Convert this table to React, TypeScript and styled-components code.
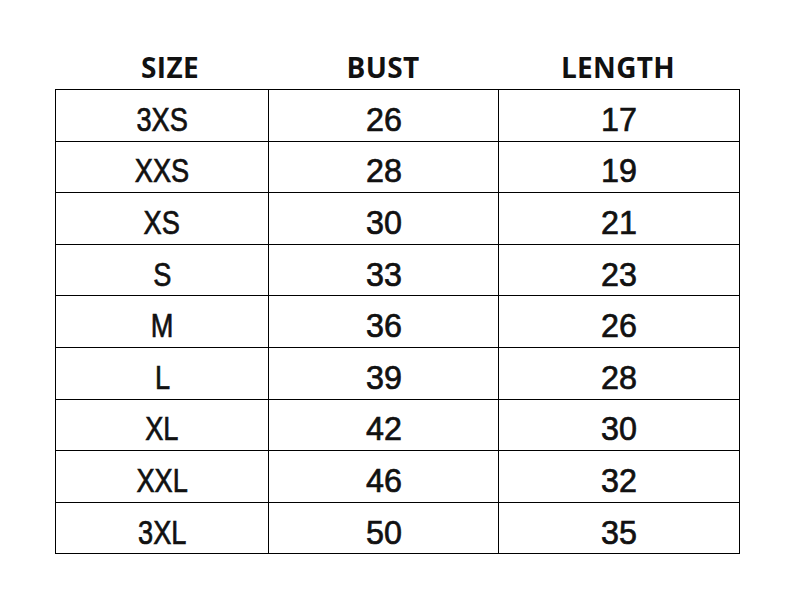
import styled, { createGlobalStyle } from "styled-components";

const GlobalStyle = createGlobalStyle`
  html, body {
    margin: 0;
    padding: 0;
    background: #fff;
  }
`;

const Page = styled.div`
  width: 792px;
  height: 591px;
  padding-left: 55px;
  box-sizing: border-box;
  background: #fff;
`;

const HeadRow = styled.div`
  display: grid;
  grid-template-columns: 213px 230px 240px;
  height: 89px;
  align-items: end;
`;

const HeadCell = styled.div<{ $shift?: number }>`
  font-family: "Open Sans", "DejaVu Sans", sans-serif;
  font-weight: 700;
  font-size: 28px;
  line-height: 28px;
  color: #111;
  text-align: center;
  padding-bottom: 8px;
  padding-left: ${(p) => (p.$shift ? `${p.$shift}px` : "0")};
  letter-spacing: 0.3px;
`;

const Table = styled.table`
  border-collapse: collapse;
  table-layout: fixed;
  width: 681px;
`;

const Cell = styled.td<{ $w: number }>`
  width: ${(p) => p.$w}px;
  height: 43.6px;
  border: 1px solid #000;
  padding: 7px 0 0;
  text-align: center;
  vertical-align: middle;
  font-family: "Liberation Sans", Arial, sans-serif;
  font-size: 34px;
  line-height: 34px;
  color: #111;
  -webkit-text-stroke: 0.7px #111;
`;

const Glyphs = styled.span<{ $squeeze: number }>`
  display: inline-block;
  transform: scaleX(${(p) => p.$squeeze});
`;

const rows: [string, number, number][] = [
  ["3XS", 26, 17],
  ["XXS", 28, 19],
  ["XS", 30, 21],
  ["S", 33, 23],
  ["M", 36, 26],
  ["L", 39, 28],
  ["XL", 42, 30],
  ["XXL", 46, 32],
  ["3XL", 50, 35],
];

export default function App() {
  return (
    <Page>
      <GlobalStyle />
      <HeadRow>
        <HeadCell $shift={17}>SIZE</HeadCell>
        <HeadCell>BUST</HeadCell>
        <HeadCell>LENGTH</HeadCell>
      </HeadRow>
      <Table>
        <tbody>
          {rows.map(([size, bust, length]) => (
            <tr key={size}>
              <Cell $w={212}>
                <Glyphs $squeeze={0.8}>{size}</Glyphs>
              </Cell>
              <Cell $w={229}>
                <Glyphs $squeeze={0.95}>{bust}</Glyphs>
              </Cell>
              <Cell $w={240}>
                <Glyphs $squeeze={0.95}>{length}</Glyphs>
              </Cell>
            </tr>
          ))}
        </tbody>
      </Table>
    </Page>
  );
}
